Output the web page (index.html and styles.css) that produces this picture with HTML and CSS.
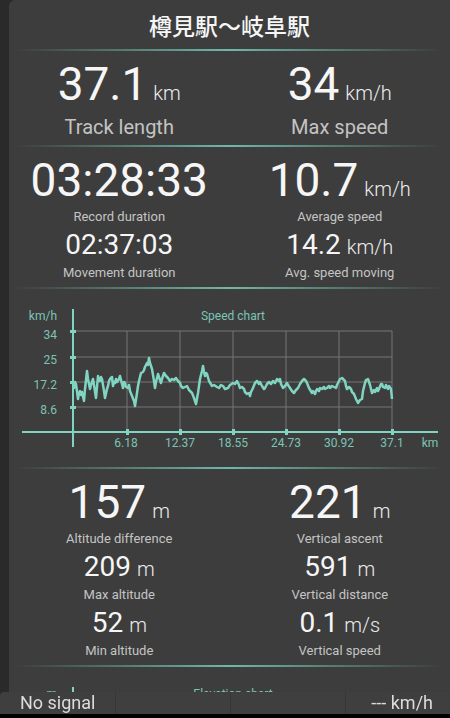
FILE: index.html
```html
<!DOCTYPE html>
<html lang="en">
<head>
    <meta charset="UTF-8">
    <meta name="viewport" content="width=device-width, initial-scale=1.0">
    <title>Track statistics</title>
    <link rel="stylesheet" href="styles.css">
</head>
<body>
    <div class="panel">
        <header class="track-title">樽見駅〜岐阜駅</header>
        <div class="rule"></div>

        <section class="stats stats-top">
            <div class="stat">
                <div class="value big">37.1<span class="unit">km</span></div>
                <div class="label">Track length</div>
            </div>
            <div class="stat">
                <div class="value big">34<span class="unit">km/h</span></div>
                <div class="label">Max speed</div>
            </div>
        </section>
        <div class="rule"></div>

        <section class="stats">
            <div class="stat">
                <div class="value big">03:28:33</div>
                <div class="label">Record duration</div>
            </div>
            <div class="stat">
                <div class="value big">10.7<span class="unit">km/h</span></div>
                <div class="label">Average speed</div>
            </div>
            <div class="stat">
                <div class="value mid">02:37:03</div>
                <div class="label">Movement duration</div>
            </div>
            <div class="stat">
                <div class="value mid">14.2<span class="unit">km/h</span></div>
                <div class="label">Avg. speed moving</div>
            </div>
        </section>
        <div class="rule"></div>

        <!-- speed chart -->
        <section class="chart">
            <svg width="441" height="178" viewBox="0 0 441 178">
                <g class="grid">
                    <line x1="64" y1="42" x2="383" y2="42"/>
                    <line x1="64" y1="68" x2="383" y2="68"/>
                    <line x1="64" y1="93" x2="383" y2="93"/>
                    <line x1="64" y1="118" x2="383" y2="118"/>
                    <line x1="118" y1="42" x2="118" y2="143"/>
                    <line x1="171" y1="42" x2="171" y2="143"/>
                    <line x1="224" y1="42" x2="224" y2="143"/>
                    <line x1="277" y1="42" x2="277" y2="143"/>
                    <line x1="330" y1="42" x2="330" y2="143"/>
                    <line x1="383" y1="42" x2="383" y2="143"/>
                </g>
                <g class="axis">
                    <line x1="64" y1="20" x2="64" y2="158"/>
                    <line x1="13" y1="143" x2="429" y2="143"/>
                </g>
                <g class="ticks">
                    <rect x="61" y="41" width="6" height="3"/>
                    <rect x="61" y="67" width="6" height="3"/>
                    <rect x="61" y="92" width="6" height="3"/>
                    <rect x="61" y="117" width="6" height="3"/>
                    <rect x="117" y="140" width="3" height="6"/>
                    <rect x="170" y="140" width="3" height="6"/>
                    <rect x="223" y="140" width="3" height="6"/>
                    <rect x="276" y="140" width="3" height="6"/>
                    <rect x="329" y="140" width="3" height="6"/>
                    <rect x="382" y="140" width="3" height="6"/>
                </g>
                <text class="chart-title" x="224" y="31">Speed chart</text>
                <g class="y-labels">
                    <text x="48" y="31">km/h</text>
                    <text x="48" y="50">34</text>
                    <text x="48" y="75">25</text>
                    <text x="48" y="100">17.2</text>
                    <text x="48" y="125">8.6</text>
                </g>
                <g class="x-labels">
                    <text x="117" y="158">6.18</text>
                    <text x="171" y="158">12.37</text>
                    <text x="224" y="158">18.55</text>
                    <text x="277" y="158">24.73</text>
                    <text x="330" y="158">30.92</text>
                    <text x="383" y="158">37.1</text>
                    <text x="421" y="158">km</text>
                </g>
                <polyline class="series" points="64,97 65,99 66,93 67,95 69,110 70,104 71,102 72,106 73,103 75,112 76,100 78,82 79,90 81,100 82,96 84,90 85,96 87,109 89,87 90,91 91,92 92,88 93,90 95,102 96,109 98,100 99,97 100,92 101,90 103,88 104,97 105,93 106,94 107,90 108,93 110,90 111,87 113,95 114,99 115,93 116,94 117,98 119,99 120,96 121,102 123,107 125,112 126,117 128,104 129,97 130,92 132,84 134,83 135,81 136,78 138,74 139,76 140,69 141,74 143,80 145,92 146,99 147,93 149,85 150,88 152,94 153,90 155,84 157,87 159,89 161,92 163,90 165,91 167,89 169,92 171,94 172,97 174,99 176,98 178,97 180,101 183,104 185,109 187,115 189,104 191,90 193,82 194,77 195,83 196,87 197,84 198,85 200,92 203,97 205,96 208,98 210,99 212,96 214,97 216,100 219,99 221,96 224,94 226,95 228,92 230,96 231,99 233,98 235,100 236,103 238,105 240,104 241,107 242,103 244,99 246,94 248,92 250,95 251,93 253,97 255,100 256,99 258,95 260,93 262,95 264,92 266,94 268,90 270,92 271,90 272,95 274,99 276,97 278,94 279,96 281,99 283,102 285,104 287,101 289,99 291,95 293,92 295,90 297,92 298,94 300,99 303,104 304,102 306,105 307,102 308,100 310,102 311,99 313,100 315,98 316,100 318,99 320,97 321,99 323,97 325,98 327,99 328,96 329,94 331,90 333,89 335,91 336,92 337,97 338,100 340,98 342,100 343,103 345,105 347,110 349,114 351,111 353,110 354,102 356,94 357,91 359,90 361,96 363,104 365,101 366,103 368,99 369,102 370,100 372,95 373,95 374,98 376,99 377,96 379,100 380,97 382,100 383,110"/>
            </svg>
        </section>
        <div class="rule"></div>

        <section class="stats">
            <div class="stat">
                <div class="value big">157<span class="unit">m</span></div>
                <div class="label">Altitude difference</div>
            </div>
            <div class="stat">
                <div class="value big">221<span class="unit">m</span></div>
                <div class="label">Vertical ascent</div>
            </div>
            <div class="stat">
                <div class="value mid">209<span class="unit">m</span></div>
                <div class="label">Max altitude</div>
            </div>
            <div class="stat">
                <div class="value mid">591<span class="unit">m</span></div>
                <div class="label">Vertical distance</div>
            </div>
            <div class="stat">
                <div class="value mid">52<span class="unit">m</span></div>
                <div class="label">Min altitude</div>
            </div>
            <div class="stat">
                <div class="value mid">0.1<span class="unit">m/s</span></div>
                <div class="label">Vertical speed</div>
            </div>
        </section>
        <div class="rule"></div>

        <!-- elevation chart -->
        <section class="chart">
            <svg width="441" height="178" viewBox="0 0 441 178">
                <g class="grid">
                    <line x1="64" y1="42" x2="383" y2="42"/>
                    <line x1="64" y1="68" x2="383" y2="68"/>
                    <line x1="64" y1="93" x2="383" y2="93"/>
                    <line x1="64" y1="118" x2="383" y2="118"/>
                </g>
                <g class="axis">
                    <line x1="64" y1="20" x2="64" y2="158"/>
                    <line x1="13" y1="143" x2="429" y2="143"/>
                </g>
                <text class="chart-title" x="224" y="31">Elevation chart</text>
                <g class="y-labels">
                    <text x="48" y="31">m</text>
                </g>
            </svg>
        </section>
    </div>

    <footer class="statusbar">
        <div class="cell">No signal</div>
        <div class="cell"></div>
        <div class="cell"></div>
        <div class="cell speed">--- km/h</div>
    </footer>
</body>
</html>
```

FILE: styles.css
```css
:root {
    --panel-color: #3d3d3d;
    --edge-color: #2a2a2a;
    --accent-color: #80d4c2;
    --accent-text: #7cc4b5;
    --label-color: #c4c4c4;
}

* {
    margin: 0;
    padding: 0;
    box-sizing: border-box;
}

body {
    height: 718px;
    overflow: hidden;
    background-color: var(--edge-color);
    font-family: Roboto, "Noto Sans CJK JP", sans-serif;
    color: #f6f6f6;
}

.panel {
    margin-left: 9px;
    min-height: 718px;
    background-color: var(--panel-color);
    border-top-left-radius: 6px;
}

.track-title {
    height: 49px;
    display: flex;
    align-items: center;
    justify-content: center;
    font-family: "Noto Sans CJK JP", sans-serif;
    font-size: 23px;
    font-weight: 500;
}

.rule {
    height: 2px;
    margin: 0 6px;
    background: linear-gradient(90deg, rgba(110, 180, 165, 0), #6fb8a8 50%, rgba(110, 180, 165, 0));
}

.stats {
    display: grid;
    grid-template-columns: 1fr 1fr;
    padding: 7px 0 4px;
    text-align: center;
}

.value {
    white-space: nowrap;
}

.value.big {
    font-size: 46px;
    line-height: 52px;
}

.value.mid {
    font-size: 28px;
    line-height: 34px;
    margin-top: 1px;
}

.unit {
    font-size: 20px;
    font-weight: 300;
    line-height: 1;
    margin-left: 6px;
    color: #ececec;
}

.label {
    font-size: 13px;
    line-height: 20px;
    color: var(--label-color);
    margin-top: 1px;
}

.stats-top {
    padding-bottom: 5px;
}

.stats-top .label {
    font-size: 20px;
    line-height: 26px;
    margin-top: 4px;
}

.chart svg {
    display: block;
}

.chart .grid line {
    stroke: #767676;
    stroke-width: 1;
}

.chart .axis line {
    stroke: var(--accent-color);
    stroke-width: 2;
}

.chart .ticks rect {
    fill: var(--accent-color);
}

.chart text {
    font-family: Roboto, sans-serif;
    font-size: 12px;
    fill: var(--accent-text);
}

.chart .chart-title,
.chart .x-labels text {
    text-anchor: middle;
}

.chart .y-labels text {
    text-anchor: end;
}

.chart .series {
    fill: none;
    stroke: var(--accent-color);
    stroke-width: 2.5;
    stroke-linejoin: round;
}

.statusbar {
    position: fixed;
    left: 0;
    right: 0;
    bottom: 0;
    height: 26px;
    display: grid;
    grid-template-columns: 115px 115px 115px 1fr;
    background-color: #3f3f3f;
    border-bottom: 4px solid #000;
    border-top-left-radius: 4px;
    font-size: 18px;
    line-height: 22px;
    color: #dcdcdc;
}

.statusbar .cell + .cell {
    border-left: 1px solid #363636;
}

.statusbar .cell:first-child {
    padding-left: 20px;
}

.statusbar .speed {
    text-align: right;
    padding-right: 17px;
}
```
